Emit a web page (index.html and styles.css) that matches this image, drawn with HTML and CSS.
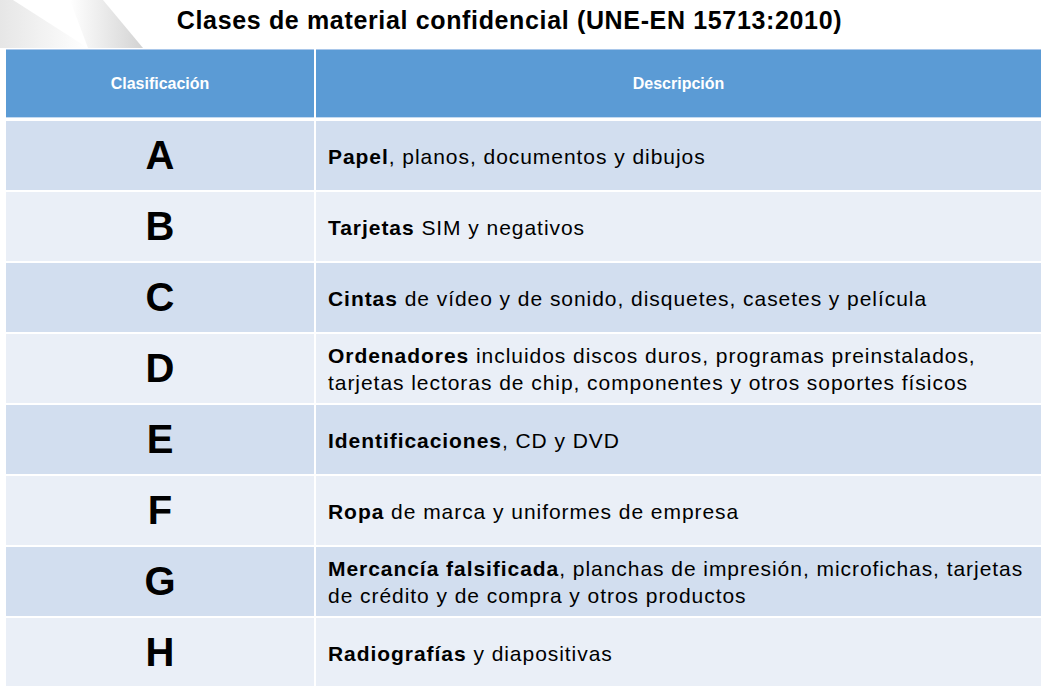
FILE: index.html
```html
<!DOCTYPE html>
<html lang="es">
<head>
<meta charset="utf-8">
<title>Clases de material confidencial</title>
<link rel="stylesheet" href="styles.css">
</head>
<body>
<div class="slide">
  <svg class="deco" width="160" height="48" viewBox="0 0 160 48" aria-hidden="true">
    <defs>
      <linearGradient id="g1" x1="0" y1="0" x2="1" y2="0">
        <stop offset="0" stop-color="#e6e6e6"/>
        <stop offset="1" stop-color="#ffffff"/>
      </linearGradient>
      <linearGradient id="g2" x1="0" y1="0" x2="1" y2="0">
        <stop offset="0" stop-color="#ffffff"/>
        <stop offset="0.75" stop-color="#dedede"/>
        <stop offset="1" stop-color="#d2d2d2"/>
      </linearGradient>
    </defs>
    <polygon points="0,0 13,0 88,48 0,48" fill="url(#g1)"/>
    <polygon points="70,0 103,0 143,48 88,48" fill="url(#g2)"/>
  </svg>
  <h1 class="title">Clases de material confidencial (UNE-EN 15713:2010)</h1>
  <div class="table">
    <div class="head">Clasificación</div>
    <div class="head">Descripción</div>

    <div class="cls odd">A</div>
    <div class="desc odd"><p class="txt"><b>Papel</b>, planos, documentos y dibujos</p></div>

    <div class="cls even">B</div>
    <div class="desc even"><p class="txt"><b>Tarjetas</b> SIM y negativos</p></div>

    <div class="cls odd">C</div>
    <div class="desc odd"><p class="txt"><b>Cintas</b> de vídeo y de sonido, disquetes, casetes y película</p></div>

    <div class="cls even">D</div>
    <div class="desc even"><p class="txt"><b>Ordenadores</b> incluidos discos duros, programas preinstalados, tarjetas lectoras de chip, componentes y otros soportes físicos</p></div>

    <div class="cls odd">E</div>
    <div class="desc odd"><p class="txt"><b>Identificaciones</b>, CD y DVD</p></div>

    <div class="cls even">F</div>
    <div class="desc even"><p class="txt"><b>Ropa</b> de marca y uniformes de empresa</p></div>

    <div class="cls odd">G</div>
    <div class="desc odd"><p class="txt"><b>Mercancía falsificada</b>, planchas de impresión, microfichas, tarjetas de crédito y de compra y otros productos</p></div>

    <div class="cls even">H</div>
    <div class="desc even"><p class="txt"><b>Radiografías</b> y diapositivas</p></div>
  </div>
</div>
</body>
</html>
```

FILE: styles.css
```css
html, body {
  margin: 0;
  padding: 0;
  background: #ffffff;
}

body {
  width: 1041px;
  height: 686px;
  overflow: hidden;
  font-family: "Liberation Sans", Arial, sans-serif;
  color: #000000;
}

.slide {
  position: relative;
  padding-left: 6px;
}

.deco {
  position: absolute;
  left: 0;
  top: 0;
}

.title {
  position: relative;
  margin: 0;
  height: 41px;
  padding-top: 8px;
  padding-right: 28px;
  font-size: 25px;
  line-height: 24px;
  font-weight: bold;
  letter-spacing: 0.65px;
  text-align: center;
}

.table {
  display: grid;
  grid-template-columns: 308px 1fr;
  grid-template-rows: 70px repeat(8, 69px);
  column-gap: 2px;
  row-gap: 2px;
}

.head {
  height: 67px;
  border-top: 1px solid #a9c7ea;
  border-bottom: 1px solid #c4daf1;
  background: #5b9bd5;
  color: #ffffff;
  font-size: 16px;
  font-weight: bold;
  display: flex;
  align-items: center;
  justify-content: center;
}

.odd {
  background: #d2deef;
}

.even {
  background: #eaeff7;
}

.cls {
  display: flex;
  align-items: center;
  justify-content: center;
  font-size: 40px;
  font-weight: bold;
}

.desc {
  display: flex;
  align-items: center;
  padding: 1px 12px 0;
}

.txt {
  margin: 0;
  font-size: 21px;
  line-height: 27px;
  letter-spacing: 0.95px;
}
```
